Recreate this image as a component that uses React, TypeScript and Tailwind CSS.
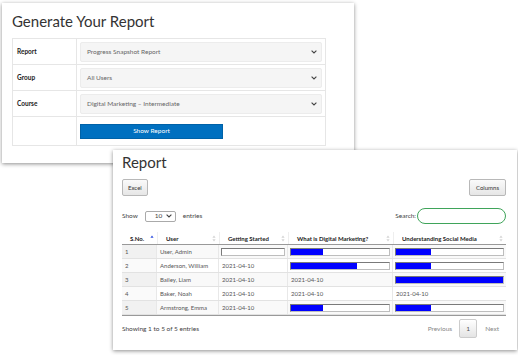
import React from 'react';

const font = { fontFamily: 'Lato, "Open Sans", sans-serif' };

const Chevron = () => (
    <svg width="6" height="4" viewBox="0 0 6 4" className="shrink-0">
        <path d="M0.6 0.6 L3 3 L5.4 0.6" fill="none" stroke="#444" strokeWidth="1.1" />
    </svg>
);

const SortIcon = ({ active }: { active?: boolean }) => (
    <svg width="4" height="7" viewBox="0 0 4 7" className="shrink-0">
        <path d="M2 0.5 L3.6 2.8 L0.4 2.8 Z" fill={active ? '#3050e0' : '#d4d4d4'} />
        {!active && <path d="M2 6.5 L3.6 4.2 L0.4 4.2 Z" fill="#d4d4d4" />}
    </svg>
);

const FormRow = ({ label, value }: { label: string, value: string }) => (
    <div className="flex h-[26px] border-b border-[#e6e6e6]">
        <div className="w-[64px] border-r border-[#e6e6e6] flex items-center pl-[4px] text-[6.5px] font-bold text-[#222]">{label}</div>
        <div className="flex-1 flex items-center px-[3px]">
            <div className="h-[20px] w-full bg-[#f5f5f5] border border-[#ececec] rounded-[2px] flex items-center justify-between pl-[6px] pr-[4px] text-[6.5px] text-[#666]">
                <span>{value}</span>
                <Chevron />
            </div>
        </div>
    </div>
);

const Bar = ({ pct }: { pct: number }) => (
    <div className="h-[8px] w-full border border-[#7a7a7a] border-r-[#bdbdbd] border-b-[#bdbdbd] bg-white">
        <div className="h-full bg-[#0000ff]" style={{ width: `${pct}%` }} />
    </div>
);

type Cell = string | number;
const rows: { n: number, user: string, cells: Cell[] }[] = [
    { n: 1, user: 'User, Admin', cells: [0, 33, 33] },
    { n: 2, user: 'Anderson, William', cells: ['2021-04-10', 67, 33] },
    { n: 3, user: 'Bailey, Liam', cells: ['2021-04-10', '2021-04-10', 100] },
    { n: 4, user: 'Baker, Noah', cells: ['2021-04-10', '2021-04-10', '2021-04-10'] },
    { n: 5, user: 'Armstrong, Emma', cells: ['2021-04-10', 33, 33] },
];

const cols = 'grid grid-cols-[35px_62px_69px_105px_113px]';

export default function App() {
    return (
        <div className="relative w-[518px] h-[355px] bg-white overflow-hidden text-[#333]" style={font}>
            {/* Generate card */}
            <div className="absolute left-[2px] top-[3px] w-[352px] h-[160px] bg-white shadow-[0_1px_4px_rgba(0,0,0,0.45)] pl-[10px] pr-[28px] pt-[9px]">
                <div className="text-[15px] leading-[18px] text-[#333] mb-[8px]">Generate Your Report</div>
                <div className="border border-[#e6e6e6] border-b-0">
                    <FormRow label="Report" value="Progress Snapshot Report" />
                    <FormRow label="Group" value="All Users" />
                    <FormRow label="Course" value="Digital Marketing – Intermediate" />
                    <div className="flex h-[29px] border-b border-[#e6e6e6]">
                        <div className="w-[64px] border-r border-[#e6e6e6]" />
                        <div className="flex-1 flex items-center px-[3px]">
                            <div className="w-[143px] h-[15px] bg-[#0070c0] border border-[#0062a8] flex items-center justify-center text-white text-[6.5px]">Show Report</div>
                        </div>
                    </div>
                </div>
            </div>

            {/* Report card */}
            <div className="absolute left-[113px] top-[150px] w-[404px] h-[200px] bg-white shadow-[0_1px_4px_rgba(0,0,0,0.45)] px-[9px] pt-[3px]">
                <div className="text-[15px] leading-[18px] text-[#333]">Report</div>
                <div className="flex justify-between mt-[8px]">
                    <div className="h-[17px] px-[5px] flex items-center bg-gradient-to-b from-[#fafafa] to-[#e6e6e6] border border-[#b8b8b8] rounded-[2px] text-[6px] text-[#333]">Excel</div>
                    <div className="h-[17px] px-[6px] mr-[2px] flex items-center bg-gradient-to-b from-[#fafafa] to-[#e6e6e6] border border-[#b8b8b8] rounded-[2px] text-[6px] text-[#333]">Columns</div>
                </div>
                <div className="flex justify-between items-center mt-[12px] w-[384px]">
                    <div className="flex items-center text-[6.5px] text-[#444]">
                        <span>Show</span>
                        <div className="ml-[7px] w-[31px] h-[11px] border border-[#aaa] rounded-[2px] flex items-center justify-between pl-[9px] pr-[3px]">
                            <span>10</span>
                            <Chevron />
                        </div>
                        <span className="ml-[7px]">entries</span>
                    </div>
                    <div className="flex items-center text-[6.5px] text-[#444]">
                        <span>Search:</span>
                        <div className="ml-[1px] w-[89px] h-[16px] rounded-full border border-[#3fa45a]" />
                    </div>
                </div>
                <div className="mt-[8px] w-[384px] text-[6px]">
                    <div className={`${cols} h-[13px] border-b border-[#999] font-bold text-[#222]`}>
                        {['S.No.', 'User', 'Getting Started', 'What is Digital Marketing?', 'Understanding Social Media'].map((h, i) => (
                            <div key={h} className={`flex items-center justify-between pl-[8px] pr-[3px] ${i > 0 ? 'border-l border-[#eee]' : ''}`}>
                                <span>{h}</span>
                                <SortIcon active={i === 0} />
                            </div>
                        ))}
                    </div>
                    {rows.map((r) => (
                        <div key={r.n} className={`${cols} h-[14px] border-b border-[#e2e2e2] text-[#555] ${r.n % 2 ? 'bg-[#f9f9f9]' : 'bg-white'}`}>
                            <div className={`flex items-center pl-[3px] border-r border-[#e8e8e8] ${r.n % 2 ? 'bg-[#f1f1f1]' : 'bg-[#fafafa]'}`}>{r.n}</div>
                            <div className="flex items-center pl-[3px] border-r border-[#e8e8e8]">{r.user}</div>
                            {r.cells.map((c, i) => (
                                <div key={i} className="flex items-center px-[2px] border-r border-[#e8e8e8] last:border-r-0">
                                    {typeof c === 'number' ? <Bar pct={c} /> : <span className="pl-[1px]">{c}</span>}
                                </div>
                            ))}
                        </div>
                    ))}
                    <div className="h-[1px] bg-[#999]" />
                </div>
                <div className="flex justify-between items-center w-[384px] mt-[3px] text-[6.5px] text-[#444]">
                    <span>Showing 1 to 5 of 5 entries</span>
                    <div className="flex items-center text-[#888]">
                        <span>Previous</span>
                        <div className="ml-[7px] w-[18px] h-[19px] flex items-center justify-center border border-[#ccc] rounded-[2px] bg-gradient-to-b from-white to-[#e4e4e4] text-[#555]">1</div>
                        <span className="ml-[8px] mr-[7px]">Next</span>
                    </div>
                </div>
            </div>
        </div>
    );
}
